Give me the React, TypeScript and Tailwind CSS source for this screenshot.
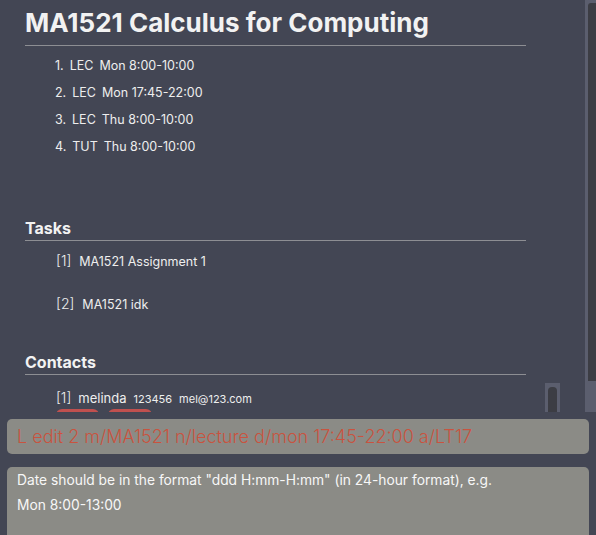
import React from 'react';

const font = { fontFamily: 'Inter, "Noto Sans", sans-serif' };

const lessons = [
  { n: '1.', type: 'LEC', time: 'Mon 8:00-10:00' },
  { n: '2.', type: 'LEC', time: 'Mon 17:45-22:00' },
  { n: '3.', type: 'LEC', time: 'Thu 8:00-10:00' },
  { n: '4.', type: 'TUT', time: 'Thu 8:00-10:00' },
];

const tasks = ['MA1521 Assignment 1', 'MA1521 idk'];

const App: React.FC = () => {
  return (
    <div
      className="w-[596px] h-[535px] overflow-hidden bg-[#434654] flex flex-col text-[#eeeeee]"
      style={font}
    >
      {/* module panel */}
      <div className="h-[412px] flex shrink-0">
        <div className="flex-1 flex overflow-hidden">
          <div className="w-[526px] pl-[25px] shrink-0">
            <h1 className="text-[26px] leading-[30px] font-bold text-[#f2f2f2] pt-[8px] pb-[7px] border-b border-[#8d8e93]">
              MA1521 Calculus for Computing
            </h1>
            <ol className="pl-[30px] pt-[12px] text-[12.5px] text-[#eeeeee]">
              {lessons.map((l) => (
                <li key={l.n} className="h-[27px] leading-[16px] flex gap-[6px]">
                  <span>{l.n}</span>
                  <span>{l.type}</span>
                  <span>{l.time}</span>
                </li>
              ))}
            </ol>

            <h2 className="mt-[52px] text-[16px] leading-[20px] font-bold text-[#f2f2f2] pb-[2px] border-b border-[#8d8e93]">
              Tasks
            </h2>
            <div className="pl-[31px] pt-[12px] text-[12.5px]">
              {tasks.map((t, i) => (
                <div key={t} className="h-[43px] flex gap-[8px] leading-[16px]">
                  <span className="text-[14px] font-light">[{i + 1}]</span>
                  <span className="pt-[1px]">{t}</span>
                </div>
              ))}
            </div>

            <h2 className="mt-[13px] text-[16px] leading-[20px] font-bold text-[#f2f2f2] pb-[2px] border-b border-[#8d8e93]">
              Contacts
            </h2>
            <div className="pl-[31px] pt-[15px]">
              <div className="flex items-baseline gap-[7px] leading-[16px]">
                <span className="text-[14px] font-light">[1]</span>
                <span className="text-[13px]">melinda</span>
                <span className="text-[11px]">123456</span>
                <span className="text-[11px]">mel@123.com</span>
              </div>
              <div className="flex gap-[9px] mt-[2px]">
                <div className="w-[43px] h-[10px] rounded-t-[6px] bg-[#c0504f]" />
                <div className="w-[44px] h-[10px] rounded-t-[6px] bg-[#c0504f]" />
              </div>
            </div>
          </div>
          <div className="ml-[19px] mt-[383px] w-[15px] h-[29px] bg-[#5b5e6e] px-[3px] pt-[4px]">
            <div className="h-full rounded-t-[4px] bg-[#3c3d44]" />
          </div>
        </div>
        <div className="w-[11px] bg-[#5b5e6e] pl-[3px] pt-[3px] pb-[31px]">
          <div className="h-full bg-[#3c3d44] rounded-tl-[3px]" />
        </div>
      </div>

      {/* command box */}
      <div className="mx-[7px] mt-[7px] h-[35px] rounded-[5px] bg-[#8b8b86] px-[10px] flex items-center shrink-0">
        <span className="text-[18px] font-light text-[#c9533f]">
          L edit 2 m/MA1521 n/lecture d/mon 17:45-22:00 a/LT17
        </span>
      </div>

      {/* result box */}
      <div className="mx-[7px] mt-[13px] flex-1 rounded-t-[5px] bg-[#8b8b86] px-[10px] pt-[1px] text-[13.8px] leading-[25px] text-[#f7f7f7]">
        Date should be in the format "ddd H:mm-H:mm" (in 24-hour format), e.g.
        <br />
        Mon 8:00-13:00
      </div>
    </div>
  );
};

export default App;
